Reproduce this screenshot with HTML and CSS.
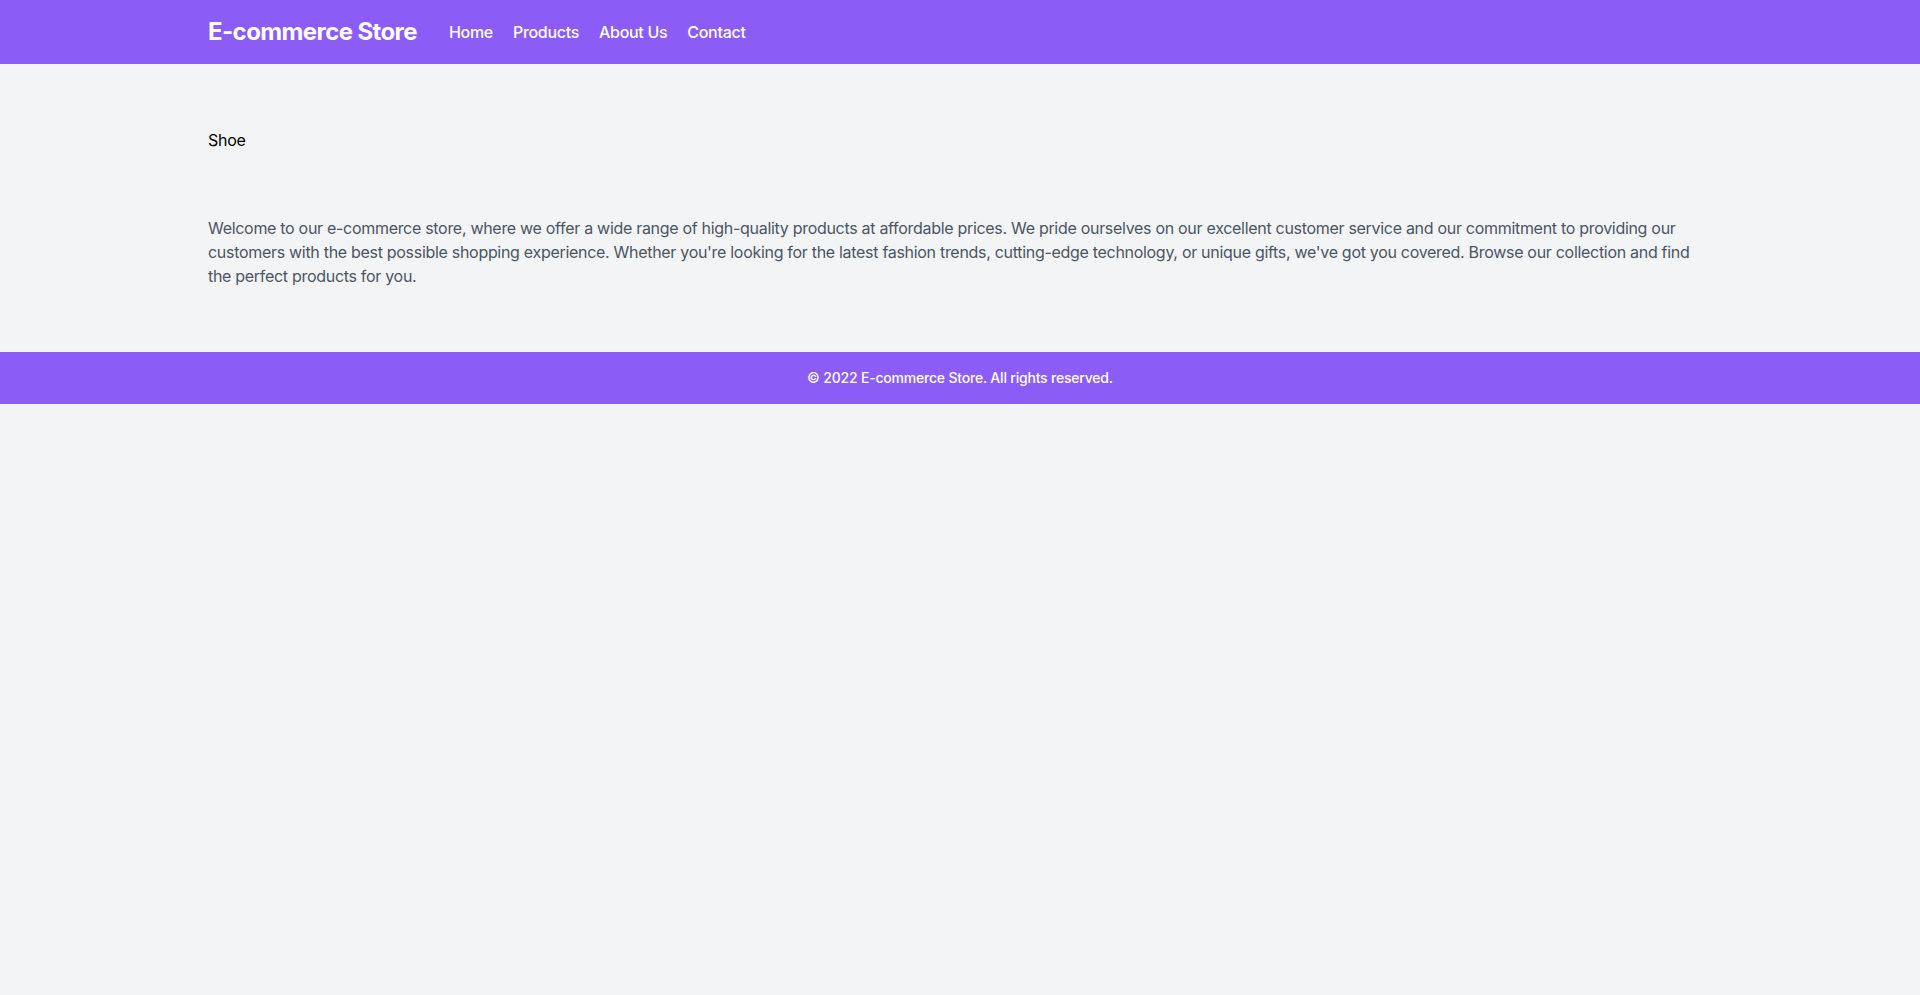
FILE: index.html
```html
<!DOCTYPE html>
<html lang="en">
<head>
<meta charset="utf-8">
<title>E-commerce Store</title>
<link rel="stylesheet" href="styles.css">
</head>
<body>
<header class="site-header">
  <div class="container nav-row">
    <a class="logo" href="#">E-commerce Store</a>
    <nav class="nav-links">
      <a href="#">Home</a>
      <a href="#">Products</a>
      <a href="#">About Us</a>
      <a href="#">Contact</a>
    </nav>
  </div>
</header>
<main class="container main">
  <section class="section">
    <div class="product">Shoe</div>
  </section>
  <section class="section">
    <p class="intro">Welcome to our e-commerce store, where we offer a wide range of high-quality products at affordable prices. We pride ourselves on our excellent customer service and our commitment to providing our customers with the best possible shopping experience. Whether you're looking for the latest fashion trends, cutting-edge technology, or unique gifts, we've got you covered. Browse our collection and find the perfect products for you.</p>
  </section>
</main>
<footer class="site-footer">
  <p>&copy; 2022 E-commerce Store. All rights reserved.</p>
</footer>
</body>
</html>
```
FILE: styles.css
```css
* { box-sizing: border-box; }
html, body { margin: 0; padding: 0; }
body {
  background: #f3f4f6;
  font-family: Inter, "Noto Sans", "Liberation Sans", sans-serif;
  font-size: 16px;
  line-height: 24px;
  letter-spacing: -0.3px;
  color: #000;
  min-height: 995px;
}
.container {
  max-width: 1536px;
  margin: 0 auto;
  padding: 0 16px;
}
.site-header {
  background: #8b5cf6;
}
.nav-row {
  height: 64px;
  display: flex;
  align-items: center;
  gap: 32px;
}
.logo {
  color: #fff;
  text-decoration: none;
  font-size: 24px;
  line-height: 32px;
  font-weight: 700;
  letter-spacing: -0.6px;
}
.nav-links {
  display: flex;
  gap: 20px;
}
.nav-links a {
  color: #fff;
  text-decoration: none;
  font-size: 16px;
  font-weight: 500;
}
.main {
  padding-top: 32px;
  padding-bottom: 32px;
}
.section {
  padding: 32px 0;
}
.product {
  color: #000;
}
.intro {
  margin: 0;
  color: #4b5563;
}
.site-footer {
  background: #8b5cf6;
  color: #fff;
  text-align: center;
  padding: 16px 0;
}
.site-footer p {
  margin: 0;
  font-size: 14px;
  line-height: 20px;
  font-weight: 500;
  letter-spacing: -0.2px;
}
```
